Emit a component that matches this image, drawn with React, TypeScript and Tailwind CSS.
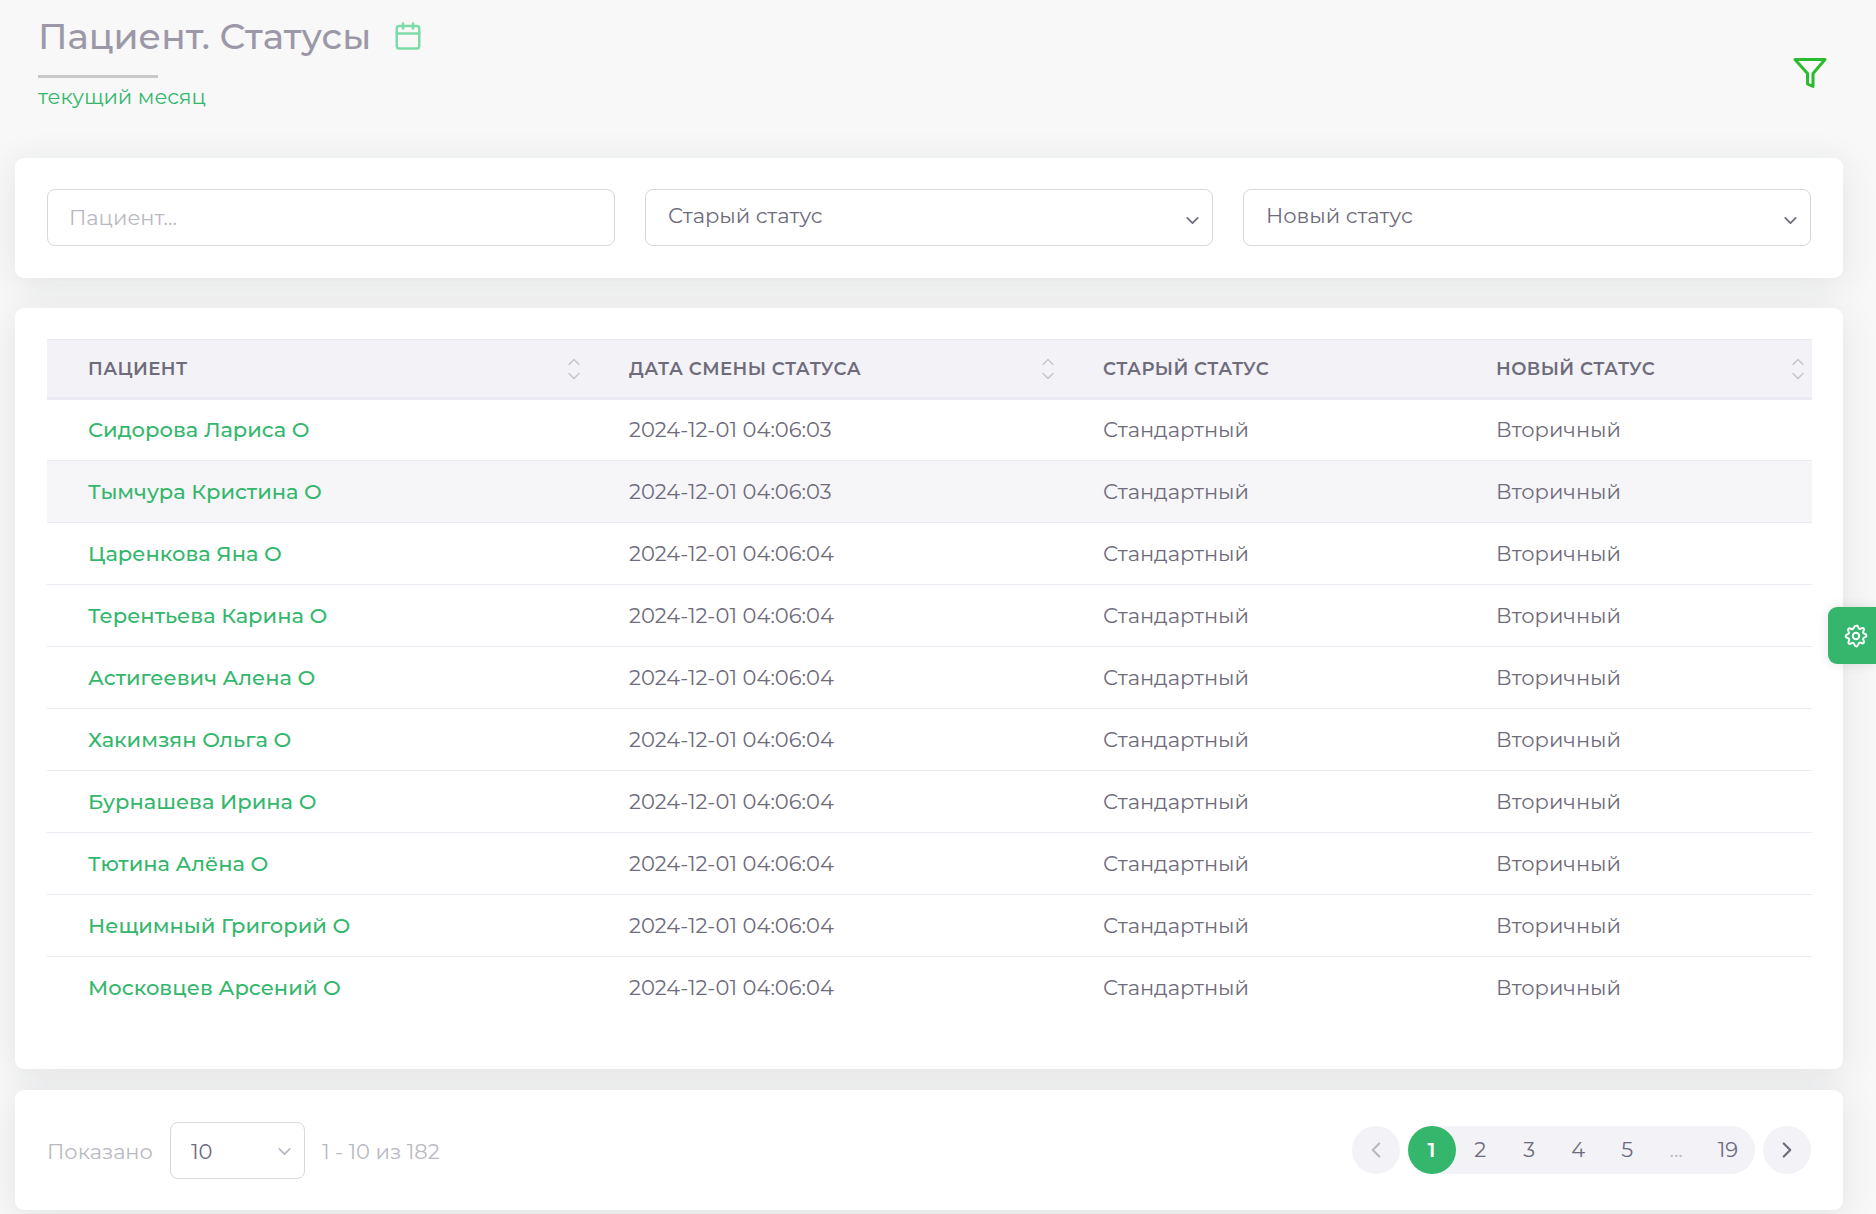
import { Calendar, ChevronDown, ChevronLeft, ChevronRight, ChevronUp } from "lucide-react";

const patients = [
  ["Сидорова Лариса О", "2024-12-01 04:06:03"],
  ["Тымчура Кристина О", "2024-12-01 04:06:03"],
  ["Царенкова Яна О", "2024-12-01 04:06:04"],
  ["Терентьева Карина О", "2024-12-01 04:06:04"],
  ["Астигеевич Алена О", "2024-12-01 04:06:04"],
  ["Хакимзян Ольга О", "2024-12-01 04:06:04"],
  ["Бурнашева Ирина О", "2024-12-01 04:06:04"],
  ["Тютина Алёна О", "2024-12-01 04:06:04"],
  ["Нещимный Григорий О", "2024-12-01 04:06:04"],
  ["Московцев Арсений О", "2024-12-01 04:06:04"],
];

const columns = [
  { title: "Пациент", sortable: true },
  { title: "Дата смены статуса", sortable: true },
  { title: "Старый статус", sortable: false },
  { title: "Новый статус", sortable: true },
];

const card = "rounded-[9px] bg-white px-8 shadow-[0_6px_36px_rgba(34,41,47,0.1)]";

function FilterSelect({ label }: { label: string }) {
  return (
    <div className="relative">
      <select
        aria-label={label}
        className="h-[57px] w-full appearance-none rounded-lg border border-[#d8d6de] bg-white pb-1 pl-[22px] pr-12 text-[21px] text-[#6e6b7b] outline-none"
      >
        <option>{label}</option>
      </select>
      <ChevronDown className="pointer-events-none absolute right-2.5 top-[21px] text-[#6e6b7b]" size={21} strokeWidth={2} />
    </div>
  );
}

function SortIcon() {
  return (
    <span className="flex flex-col items-center text-[#c4c2cd]">
      <ChevronUp size={20} strokeWidth={1.5} className="-mb-1.5" />
      <ChevronDown size={20} strokeWidth={1.5} />
    </span>
  );
}

function GearIcon() {
  return (
    <svg width="24" height="24" viewBox="0 0 24 24" fill="none" stroke="currentColor" strokeWidth="2" strokeLinejoin="round">
      <circle cx="12" cy="12" r="3.2" />
      <path d="M12.5 1.6C14.6 1.4 14 4.3 15.4 4.9C16.8 5.4 18.3 2.9 19.7 4.5C21.1 6 18.5 7.2 19.1 8.7C19.7 10.1 22.4 9.4 22.4 11.6C22.5 13.7 19.7 13.1 19.1 14.6C18.6 16 21.1 17.5 19.6 19C18.1 20.5 16.8 18 15.4 18.6C14 19.2 14.6 22.3 12.4 22.4C10.2 22.5 10.7 19.5 9.3 18.9C7.8 18.3 6.4 20.8 4.9 19.4C3.4 17.9 5.7 16.6 5.2 15.1C4.6 13.7 1.7 14.4 1.6 12.3C1.5 10.2 4.3 10.6 4.9 9.2C5.5 7.8 3 6.4 4.5 4.8C6 3.3 7.3 5.7 8.7 5.1C10.1 4.6 9.4 1.8 12.5 1.6Z" />
    </svg>
  );
}

function PageButton({ label, active = false }: { label: string; active?: boolean }) {
  return (
    <button
      type="button"
      aria-current={active ? "page" : undefined}
      className={
        active
          ? "h-12 w-12 rounded-full bg-[#34b76c] font-semibold text-white"
          : "h-12 min-w-[49px] px-[17px] text-[#6e6b7b]"
      }
    >
      {label}
    </button>
  );
}

export default function App() {
  return (
    <div className="min-h-screen bg-[#f8f8f8] pb-1 pl-[15px] pr-[33px] font-['Montserrat',Inter,'Noto_Sans',sans-serif] text-[21px] leading-8 text-[#6e6b7b]">
      <header className="flex items-start justify-between pl-[23px] pr-4 pt-3">
        <div className="flex h-[146px] flex-col items-start">
          <div className="flex items-center gap-[22px]">
            <h1 className="text-4xl font-medium leading-[48px] text-[#9c98a8]">Пациент. Статусы</h1>
            <button type="button" aria-label="Выбрать период" className="text-[#7edba8]">
              <Calendar size={30} strokeWidth={2} />
            </button>
          </div>
          <div className="mt-[15px] h-[3px] w-[120px] bg-[#c8c8c8]" />
          <a href="#period" className="mt-0.5 leading-[34px] text-[#34b76c]">текущий месяц</a>
        </div>
        <button type="button" aria-label="Фильтр" className="mt-11 text-[#2abb2e]">
          <svg width="34" height="34" viewBox="0 0 34 34" fill="none" stroke="currentColor" strokeWidth="3" strokeLinejoin="round">
            <path d="M2 3.5H32L20 17.5V30.500L14.500 28V17.500Z" />
          </svg>
        </button>
      </header>

      <main>
        <section className={`${card} grid grid-cols-3 gap-[30px] pb-8 pt-[31px]`}>
          <input
            type="text"
            aria-label="Пациент"
            placeholder="Пациент..."
            className="h-[57px] w-full rounded-lg border border-[#d8d6de] bg-white px-[21px] text-[21px] outline-none placeholder:text-[#b9b9c3]"
          />
          <FilterSelect label="Старый статус" />
          <FilterSelect label="Новый статус" />
        </section>

        <section className={`${card} mt-[30px] pb-[50px] pt-[31px]`}>
          <table className="w-full table-fixed border-collapse text-left">
            <colgroup>
              <col className="w-[541px]" />
              <col className="w-[474px]" />
              <col className="w-[393px]" />
              <col className="w-[357px]" />
            </colgroup>
            <thead>
              <tr className="h-[59px] border-b-[3px] border-t border-b-[#ebe9f1] border-t-[#ebe9f1] bg-[#f3f2f7]">
                {columns.map((column) => (
                  <th key={column.title} scope="col" className="p-0 pl-[41px] pr-1 text-lg font-semibold uppercase tracking-wide">
                    <div className="flex h-[55px] items-center justify-between">
                      {column.title}
                      {column.sortable && <SortIcon />}
                    </div>
                  </th>
                ))}
              </tr>
            </thead>
            <tbody>
              {patients.map(([name, date], i) => (
                <tr key={name} className={`h-[62px] border-[#ebe9f1] not-last:border-b ${i === 1 ? "bg-[#f6f6f9]" : ""}`}>
                  <td className="p-0 pl-[41px]">
                    <a href="#patient" className="font-medium text-[#34b76c]">{name}</a>
                  </td>
                  <td className="p-0 pl-[41px]">{date}</td>
                  <td className="p-0 pl-[41px]">Стандартный</td>
                  <td className="p-0 pl-[41px]">Вторичный</td>
                </tr>
              ))}
            </tbody>
          </table>
        </section>

        <footer className={`${card} mt-[21px] flex items-center justify-between pb-[31px] pt-8`}>
          <div className="flex items-center gap-[17px] text-[#b9b9c3]">
            <label htmlFor="page-size" className="pt-1">Показано</label>
            <div className="relative">
              <select
                id="page-size"
                className="h-[57px] w-[135px] appearance-none rounded-lg border border-[#d8d6de] bg-white pl-5 pt-1 text-[21px] text-[#6e6b7b] outline-none"
              >
                <option>10</option>
              </select>
              <ChevronDown className="pointer-events-none absolute right-2.5 top-[19px] text-[#b9b9c3]" size={21} strokeWidth={2} />
            </div>
            <span className="pt-1">1 - 10 из 182</span>
          </div>
          <nav aria-label="Страницы" className="flex items-center gap-2">
            <button type="button" aria-label="Назад" className="grid h-12 w-12 place-items-center rounded-full bg-[#f3f2f7] text-[#b9b9c3]">
              <ChevronLeft size={26} strokeWidth={2} />
            </button>
            <div className="flex rounded-full bg-[#f3f2f7]">
              <PageButton label="1" active />
              <PageButton label="2" />
              <PageButton label="3" />
              <PageButton label="4" />
              <PageButton label="5" />
              <span className="h-12 w-[49px] text-center leading-[48px] text-[#b9b9c3]">...</span>
              <PageButton label="19" />
            </div>
            <button type="button" aria-label="Вперёд" className="grid h-12 w-12 place-items-center rounded-full bg-[#f3f2f7] text-[#6e6b7b]">
              <ChevronRight size={26} strokeWidth={2} />
            </button>
          </nav>
        </footer>
      </main>

      <button
        type="button"
        aria-label="Настройки"
        className="fixed right-0 top-1/2 grid h-[57px] w-12 place-items-center rounded-l-[9px] bg-[#34b76c] pl-2 text-white shadow-[0_0_12px_rgba(34,41,47,0.12)]"
      >
        <GearIcon />
      </button>
    </div>
  );
}
